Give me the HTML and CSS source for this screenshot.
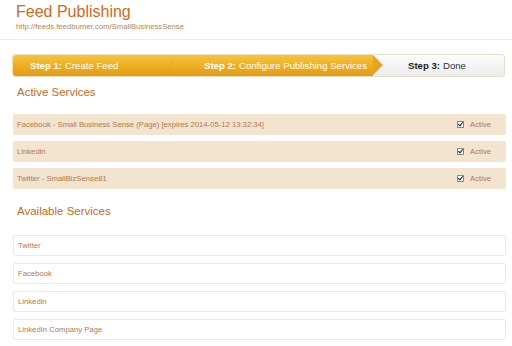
FILE: index.html
```html
<!DOCTYPE html>
<html>
<head>
<meta charset="utf-8">
<link rel="stylesheet" href="styles.css">
</head>
<body>
<div class="page">
  <header class="head">
    <h1 class="title">Feed Publishing</h1>
    <div class="url">http://feeds.feedburner.com/SmallBusinessSense</div>
  </header>
  <div class="steps">
    <div class="step step1"><b>Step 1:</b> Create Feed</div>
    <div class="step step2"><b>Step 2:</b> Configure Publishing Services</div>
    <div class="step step3"><b>Step 3:</b> Done</div>
  </div>
  <h2 class="section">Active Services</h2>
  <div class="list">
    <div class="row active"><span>Facebook - Small Business Sense (Page) [expires 2014-05-12 13:32:34]</span><span class="stat"><span class="cb"></span>Active</span></div>
    <div class="row active"><span>Linkedin</span><span class="stat"><span class="cb"></span>Active</span></div>
    <div class="row active"><span>Twitter - SmallBizSense81</span><span class="stat"><span class="cb"></span>Active</span></div>
  </div>
  <h2 class="section avail">Available Services</h2>
  <div class="list list2">
    <div class="row avail-row">Twitter</div>
    <div class="row avail-row">Facebook</div>
    <div class="row avail-row">Linkedin</div>
    <div class="row avail-row">LinkedIn Company Page</div>
  </div>
</div>
</body>
</html>
```
FILE: styles.css
```css
html, body { margin: 0; padding: 0; background: #fff; }
body { font-family: "Liberation Sans", Arial, sans-serif; width: 512px; height: 346px; overflow: hidden; }
.page { padding: 0 6px 0 13px; }
.head { padding: 3px 0 0 16px; border-bottom: 1px solid #f3ece1; height: 40px; box-sizing: border-box; margin-right: -6px; margin-left: -13px; }
.title { margin: 0; font-weight: normal; font-size: 16px; line-height: 18px; color: #cf6a1c; }
.url { font-size: 7.7px; color: #b5845a; margin-top: 1px; }
.steps { display: flex; margin-top: 15px; height: 21px; width: 491px; border-radius: 3px; overflow: hidden; box-shadow: 0 0 0 1px #e7dcc7; background: linear-gradient(#fdfdfd, #ececec); font-size: 9.6px; }
.step { display: flex; align-items: center; color: #fff; white-space: nowrap; position: relative; }
.step b { margin-right: 3px; }
.step1, .step2 { background: linear-gradient(#f7c43a, #e39b12); }
.step1 { width: 160px; padding-left: 17px; box-sizing: border-box; }
.step1::after { content: ""; position: absolute; right: -2px; top: 0; width: 8px; height: 21px; background: linear-gradient(to bottom right, transparent 45%, #d8930f 50%, transparent 55%); opacity: .5; }
.step2 { width: 200px; padding-left: 31px; box-sizing: border-box; }
.step2::after { content: ""; position: absolute; right: -10px; top: 0; border-left: 10px solid #eaa41b; border-top: 10.5px solid transparent; border-bottom: 10.5px solid transparent; }
.step3 { flex: 1; color: #333; padding-left: 35px; }
.step3 b { color: #222; }
.section { margin: 0; font-weight: normal; font-size: 11.5px; color: #c66a22; padding: 10px 0 0 4px; height: 26px; box-sizing: border-box; }
.list { display: flex; flex-direction: column; gap: 6px; margin-top: 12px; width: 493px; }
.row { height: 21px; display: flex; align-items: center; justify-content: space-between; padding: 0 15px 0 4px; font-size: 7.7px; border-radius: 2px; box-sizing: border-box; }
.active { background: #f2e4ce; color: #b7774a; }
.stat { display: flex; align-items: center; }
.cb { width: 5px; height: 5px; border: 1px solid #888; background: #fff; margin-right: 6px; position: relative; }
.cb::after { content: ""; position: absolute; left: 1px; top: -1px; width: 2px; height: 4px; border: solid #222; border-width: 0 1px 1px 0; transform: rotate(40deg); }
.avail { margin-top: 6px; }
.list2 { margin-top: 14px; gap: 7px; }
.avail-row { background: #fff; border: 1px solid #f0e8d8; color: #b07a50; justify-content: flex-start; }
```
